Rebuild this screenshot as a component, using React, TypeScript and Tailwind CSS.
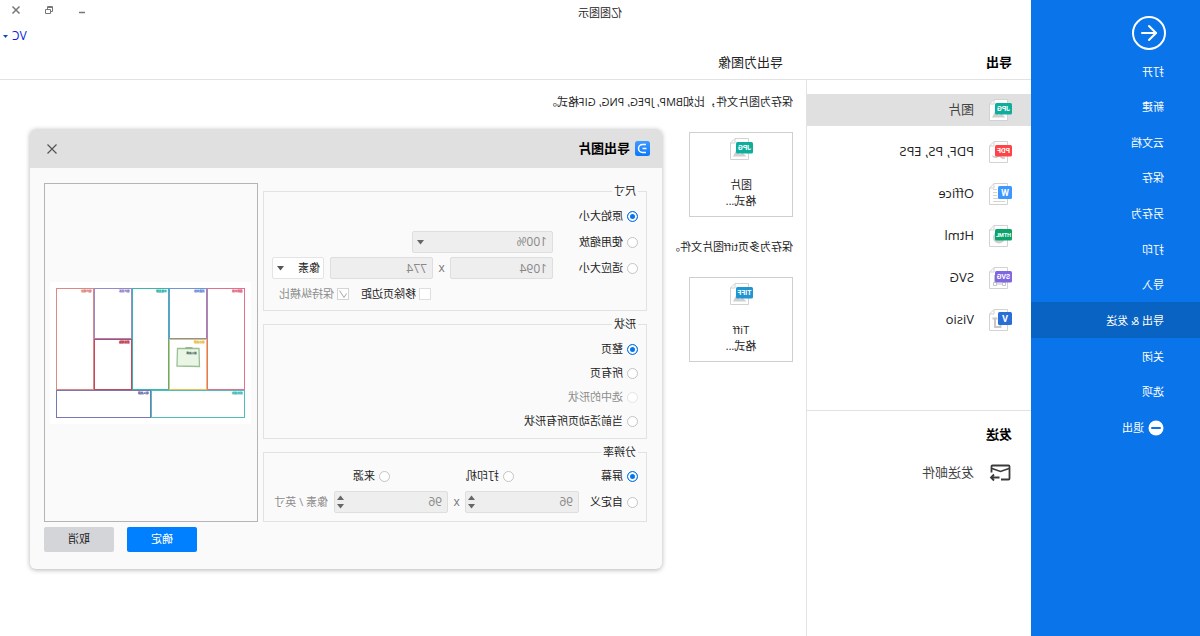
import React, { useState } from 'react';
import { ArrowLeft } from 'lucide-react';

type FileKind = 'JPG' | 'PDF' | 'W' | 'HTML' | 'SVG' | 'V' | 'TIFF';

const menuItems = ['打开', '新建', '云文档', '保存', '另存为', '打印', '导入', '导出 & 发送', '关闭', '选项'];

const exportTypes: { label: string; kind: FileKind }[] = [
  { label: '图片', kind: 'JPG' },
  { label: 'PDF, PS, EPS', kind: 'PDF' },
  { label: 'Office', kind: 'W' },
  { label: 'Html', kind: 'HTML' },
  { label: 'SVG', kind: 'SVG' },
  { label: 'Visio', kind: 'V' },
];

const badgeColors: Record<FileKind, string> = {
  JPG: '#0fae9c',
  PDF: '#ff4448',
  W: '#3d97ff',
  HTML: '#0aa36c',
  SVG: '#8066e0',
  V: '#2a6fd6',
  TIFF: '#1f95d2',
};

const badgeFontSizes: Record<FileKind, number> = {
  JPG: 7, PDF: 7, W: 9, HTML: 5.5, SVG: 7, V: 9, TIFF: 7,
};

// what peeks out from behind the badge
const FileDetail = ({ kind }: { kind: FileKind }) => {
  if (kind === 'W') {
    return <path d="M15 7.5h4M15 10.5h4M15 13.5h4M7 16.5h12M7 19.5h12" stroke="#d4d4d4" />;
  }
  if (kind === 'SVG') {
    return <path d="M6.5 16.5h3v3h-3zM15.5 16.5h3v3h-3zM9.500 18h6M17.5 16V9" stroke="#c4c4c4" fill="none" />;
  }
  if (kind === 'HTML') {
    return <circle cx="13" cy="13.5" r="6" fill="#cfcfcf" />;
  }
  if (kind === 'PDF') {
    return <path d="M7 18c3 0 4-1 5.5-3.5 1.5 2 4 3.5 7 1.5-2 2.5-5 1-7 0-1.5 2-3 3-5.5 2z" fill="#c8c8c8" stroke="#c8c8c8" />;
  }
  if (kind === 'V') {
    return <path d="M11.5 15v4h5.5v-9M14.500 10.5h5" stroke="#c8c8c8" strokeWidth="2" fill="none" />;
  }
  return <path d="M6.5 19.500l4-4 3 2 3-5 3.5 7z" fill="#cfcfcf" />;
};

const FileIcon = ({ kind }: { kind: FileKind }) => {
  const square = kind === 'W' || kind === 'V';
  return (
    <svg width="24" height="24" viewBox="0 0 24 24" className="shrink-0" aria-hidden="true">
      <path d="M4.5 1.5H18L22.5 6V22.5H4.5z" fill="#fff" stroke="#d2d2d2" />
      <path d="M18 1.5V6h4.5" fill="none" stroke="#d2d2d2" />
      <FileDetail kind={kind} />
      <rect x="0" y={square ? 4 : 5} width={square ? 14 : 17} height={square ? 13 : 11.5} rx="1.5" fill={badgeColors[kind]} />
      <text
        x={square ? 7 : 8.5}
        y={square ? 13.5 : 13.2}
        textAnchor="middle"
        fontSize={badgeFontSizes[kind]}
        fontWeight="700"
        fontFamily="Roboto, sans-serif"
        fill="#fff"
      >
        {kind}
      </text>
    </svg>
  );
};

const Caret = ({ className = '' }: { className?: string }) => (
  <svg width="7" height="5" viewBox="0 0 7 5" className={className} aria-hidden="true">
    <path d="M0 0h7L3.5 4.500z" fill="currentColor" />
  </svg>
);

interface RadioProps {
  name: string;
  label: string;
  checked: boolean;
  disabled?: boolean;
  onChange: () => void;
}

const Radio = ({ name, label, checked, disabled, onChange }: RadioProps) => (
  <label className={`flex items-center gap-1 ${disabled ? 'text-[#8c8c8c]' : ''}`}>
    <input
      type="radio"
      name={name}
      checked={checked}
      disabled={disabled}
      onChange={onChange}
      className="appearance-none w-[11px] h-[11px] rounded-full border border-[#c4c4c4] bg-white checked:border-[#0a75ea] checked:bg-[#0a75ea] checked:shadow-[inset_0_0_0_2px_white] disabled:border-[#e4e4e4]"
    />
    {label}
  </label>
);

const Spinner = ({ label }: { label: string }) => (
  <div className="flex w-[114px] h-[22px] border border-[#dedede] rounded-xs bg-[#eeeeee]">
    <input aria-label={label} defaultValue="96" disabled className="min-w-0 flex-1 px-[5px] text-xs text-[#888888]" />
    <div className="flex flex-col justify-center gap-1 pr-0.5 text-[#666666]">
      <button aria-label={`${label} +`} disabled><Caret className="rotate-180" /></button>
      <button aria-label={`${label} -`} disabled><Caret /></button>
    </div>
  </div>
);

const Tile = ({ kind, title }: { kind: FileKind; title: string }) => (
  <button className="flex flex-col items-center w-[104px] h-[85px] pt-1 border border-[#cfcfcf] bg-white leading-4">
    <FileIcon kind={kind} />
    <span className="mt-4">{title}</span>
    <span>格式...</span>
  </button>
);

const canvasBlocks = [
  { x: 6.5, y: 6.5, w: 37, h: 101, color: '#e4708c', label: '重要伙伴' },
  { x: 44.5, y: 6.5, w: 37, h: 50, color: '#7096d8', label: '关键业务' },
  { x: 44.5, y: 57.5, w: 37, h: 50, color: '#efc050', label: '核心资源' },
  { x: 82.5, y: 6.5, w: 36, h: 101, color: '#3cb5ae', label: '价值主张' },
  { x: 119.5, y: 6.5, w: 37, h: 50, color: '#968ac8', label: '客户关系' },
  { x: 119.5, y: 57.5, w: 37, h: 50, color: '#c2485a', label: '渠道通路' },
  { x: 157.5, y: 6.5, w: 37, h: 101, color: '#dc8a86', label: '客户细分' },
  { x: 6.5, y: 108.5, w: 93, h: 27, color: '#4fbdbd', label: '成本结构' },
  { x: 100.5, y: 108.5, w: 94, h: 27, color: '#7778b0', label: '收入来源' },
];

const Preview = () => (
  <div className="flex items-center justify-center w-[214px] border border-[#b4b4b4]">
    <svg width="201" height="142" viewBox="0 0 201 142" className="bg-white" role="img" aria-label="导出图片">
      {canvasBlocks.map((b) => (
        <g key={b.label}>
          <rect x={b.x} y={b.y} width={b.w} height={b.h} fill="#fff" stroke={b.color} />
          <text x={b.x + 2} y={b.y + 3.7} fontSize="2.6" fontWeight="700" fill={b.color} stroke={b.color} strokeWidth="0.3">{b.label}</text>
        </g>
      ))}
      <path d="M52 66.500h21.500l.5 17.500-22.500.500z" fill="#e9f6e6" stroke="#9dbf93" strokeWidth="1.300" />
      <path d="M58.500 66h7" stroke="#8fb585" strokeWidth="1.800" />
      <text x="54.500" y="71.500" fontSize="2.500" fill="#55706a" stroke="#55706a" strokeWidth="0.200">核心资源</text>
    </svg>
  </div>
);

const ExportDialog = () => {
  const [size, setSize] = useState('原始大小');
  const [shape, setShape] = useState('整页');
  const [dpi, setDpi] = useState('屏幕');

  const field = 'h-[22px] px-[5px] border border-[#dedede] rounded-xs bg-[#eeeeee] text-xs text-[#888888]';
  const group = 'border border-[#e2e2e2] pl-2';

  return (
    <div role="dialog" aria-labelledby="dialog-title" className="absolute top-[129px] right-[30px] w-[632px] rounded-md bg-[#fafafa] shadow-[0_1px_5px_rgba(0,0,0,0.3)] overflow-hidden">
      <div className="flex items-center h-[39px] pl-3 pr-[17px] bg-[#e0e0e0]">
        <svg width="15" height="15" viewBox="0 0 15 15" aria-hidden="true">
          <defs>
            <linearGradient id="logo" x1="0" y1="0" x2="0" y2="1">
              <stop offset="0" stopColor="#3f9bff" />
              <stop offset="1" stopColor="#0a78fa" />
            </linearGradient>
          </defs>
          <rect width="15" height="15" rx="2.5" fill="url(#logo)" />
          <path d="M4 3.500h3.500a4 4 0 0 1 0 8H4M3.500 7.500h4" fill="none" stroke="#fff" strokeWidth="1.5" />
        </svg>
        <h2 id="dialog-title" className="ml-[5px] flex-1 text-[13px] font-bold text-black">导出图片</h2>
        <button aria-label="关闭">
          <svg width="10" height="10" viewBox="0 0 10 10" aria-hidden="true">
            <path d="M.5.5l9 9M9.5.5l-9 9" stroke="#555" strokeWidth="1.2" />
          </svg>
        </button>
      </div>

      <div className="flex gap-[5px] pt-[15px] pl-[15px] pr-[14px]">
        <div className="flex-1 flex flex-col gap-[5px]">
          {/* Size */}
          <fieldset className={group}>
            <legend className="px-0.5 leading-4">尺寸</legend>
            <div className="flex flex-col gap-1 pt-1.5 pb-[5px]">
              <div className="flex items-center h-[22px]">
                <Radio name="size" label="原始大小" checked={size === '原始大小'} onChange={() => setSize('原始大小')} />
              </div>
              <div className="flex items-center h-[22px]">
                <div className="w-[85px]">
                  <Radio name="size" label="使用缩放" checked={size === '使用缩放'} onChange={() => setSize('使用缩放')} />
                </div>
                <div className="relative">
                  <select aria-label="使用缩放" disabled className={`${field} appearance-none w-[141px] opacity-100`}>
                    <option>100%</option>
                  </select>
                  <Caret className="absolute right-[5px] top-[9px] text-[#666666] pointer-events-none" />
                </div>
              </div>
              <div className="flex items-center h-[22px]">
                <div className="w-[85px]">
                  <Radio name="size" label="适应大小" checked={size === '适应大小'} onChange={() => setSize('适应大小')} />
                </div>
                <input aria-label="宽度" defaultValue="1094" disabled className={`${field} w-[103px]`} />
                <span className="w-[17px] text-center text-xs text-[#777777]">x</span>
                <input aria-label="高度" defaultValue="774" disabled className={`${field} w-[103px]`} />
                <div className="relative ml-1.5">
                  <select aria-label="单位" className="appearance-none w-[52px] h-[22px] px-[3px] border border-[#e4e4e4] rounded-xs bg-white">
                    <option>像素</option>
                  </select>
                  <Caret className="absolute right-[5px] top-[9px] text-[#555555] pointer-events-none" />
                </div>
              </div>
              <div className="flex items-center h-[22px] pl-[207px]">
                <label className="flex items-center gap-[3px]">
                  <input type="checkbox" className="appearance-none w-3 h-3 border border-[#dedede] bg-white checked:bg-[#0a75ea]" />
                  移除页边距
                </label>
                <label className="flex items-center gap-[3px] ml-3 text-[#8c8c8c]">
                  <span className="relative flex">
                    <input type="checkbox" defaultChecked disabled className="appearance-none w-3 h-3 border border-[#d4d4d4] bg-white" />
                    <svg width="12" height="12" viewBox="0 0 12 12" className="absolute inset-0" aria-hidden="true">
                      <path d="M2.5 5.5L5 9.5 9.5 2.5" fill="none" stroke="#a8a8a8" />
                    </svg>
                  </span>
                  保持纵横比
                </label>
              </div>
            </div>
          </fieldset>

          {/* Shape */}
          <fieldset className={group}>
            <legend className="px-0.5 leading-4">形状</legend>
            <div className="pt-[5px] pb-[5px]">
              {['整页', '所有页', '选中的形状', '当前活动页所有形状'].map((s) => (
                <div key={s} className="flex items-center h-6">
                  <Radio name="shape" label={s} checked={shape === s} disabled={s === '选中的形状'} onChange={() => setShape(s)} />
                </div>
              ))}
            </div>
          </fieldset>

          {/* Resolution */}
          <fieldset className={group}>
            <legend className="px-0.5 leading-4">分辨率</legend>
            <div className="flex flex-col gap-1 pt-[5px] pb-2">
              <div className="flex items-center h-[22px]">
                {['屏幕', '打印机', '来源'].map((d) => (
                  <div key={d} className="w-[124px]">
                    <Radio name="dpi" label={d} checked={dpi === d} onChange={() => setDpi(d)} />
                  </div>
                ))}
              </div>
              <div className="flex items-center h-[22px]">
                <div className="w-[59px]">
                  <Radio name="dpi" label="自定义" checked={dpi === '自定义'} onChange={() => setDpi('自定义')} />
                </div>
                <Spinner label="水平" />
                <span className="w-[17px] text-center text-xs text-[#777777]">x</span>
                <Spinner label="垂直" />
                <span className="ml-1.5 text-[#8c8c8c]">像素 / 英寸</span>
              </div>
            </div>
          </fieldset>
        </div>
        <Preview />
      </div>

      <div className="flex justify-end gap-[13px] pt-[5px] pr-[14px] pb-[17px]">
        <button className="w-[70px] h-[25px] rounded-xs bg-[#0080ff] text-white">确定</button>
        <button className="w-[70px] h-[25px] rounded-xs bg-[#d4d5d9] text-[#222222]">取消</button>
      </div>
    </div>
  );
};

const App = () => {
  const [active, setActive] = useState('导出 & 发送');
  const [type, setType] = useState('图片');

  return (
    <div className="relative flex min-h-screen -scale-x-100 bg-white text-[11px] text-[#222222] font-['Open_Sans','Noto_Sans_CJK_SC',sans-serif]">
      {/* Sidebar */}
      <nav className="w-[169px] shrink-0 pt-4 bg-[#0a75ea] text-white">
        <button aria-label="返回" className="flex items-center justify-center ml-[34px] w-[34px] h-[34px] rounded-full border-2 border-white">
          <ArrowLeft size={24} strokeWidth={2} />
        </button>
        <div className="grid auto-rows-fr h-[392px] mt-[3px]">
          {menuItems.map((item) => (
            <button
              key={item}
              onClick={() => setActive(item)}
              className={`flex items-center pl-9 pt-0.5 ${active === item ? 'bg-[#0963c3]' : ''}`}
            >
              {item}
            </button>
          ))}
          <button className="flex items-center gap-1 pl-9 pt-0.5">
            <svg width="16" height="16" viewBox="0 0 16 16" aria-hidden="true">
              <circle cx="8" cy="8" r="7.5" fill="#fff" />
              <path d="M4 8h8" stroke="#0a75ea" strokeWidth="2" strokeLinecap="round" />
            </svg>
            退出
          </button>
        </div>
      </nav>

      <div className="flex-1 flex flex-col">
        {/* Title bar */}
        <header className="border-b border-[#e2e2e2]">
          <div className="flex h-[26px]">
            <div className="flex-1 pr-[59px] text-center leading-[26px]">亿图图示</div>
            <div className="flex justify-end items-center gap-[17px] w-[110px] h-5 pr-2 text-[#777777]">
              <button aria-label="最小化" className="flex justify-center w-4">
                <svg width="10" height="10" viewBox="0 0 10 10"><path d="M2 7.5h6" stroke="currentColor" strokeWidth="1.5" /></svg>
              </button>
              <button aria-label="还原" className="flex justify-center w-4">
                <svg width="10" height="10" viewBox="0 0 10 10" fill="none" stroke="currentColor">
                  <path d="M3.5 4.5h5v4h-5zM3 6.5H1.5v-5h5V4M1.5 2.500h5" />
                </svg>
              </button>
              <button aria-label="关闭窗口" className="flex justify-center w-4">
                <svg width="10" height="10" viewBox="0 0 10 10"><path d="M1.5 1.5l7 7M8.5 1.5l-7 7" stroke="currentColor" strokeWidth="1.5" /></svg>
              </button>
            </div>
          </div>
          <div className="flex justify-end h-5 pr-[3px]">
            <button className="flex items-center gap-1 text-xs text-[#0a1be0]">
              VC
              <svg width="5" height="3" viewBox="0 0 5 3" aria-hidden="true"><path d="M0 0h5L2.5 3z" fill="#0a4fc0" /></svg>
            </button>
          </div>
          <div className="flex items-center h-[33px] text-[13px]">
            <h1 className="w-[225px] pl-[19px] font-bold text-black">导出</h1>
            <h2 className="pl-[23px]">导出为图像</h2>
          </div>
        </header>

        <div className="flex-1 flex">
          {/* Export types */}
          <section className="w-[225px] border-r border-[#e2e2e2] text-[13px]">
            <ul className="flex flex-col gap-2.5 pt-3.5 pb-[74px]">
              {exportTypes.map((t) => (
                <li key={t.label}>
                  <button
                    onClick={() => setType(t.label)}
                    className={`flex items-center gap-3.5 w-full h-8 pl-[19px] ${type === t.label ? 'bg-[#e0e0e0] text-[#444444]' : ''}`}
                  >
                    <FileIcon kind={t.kind} />
                    {t.label}
                  </button>
                </li>
              ))}
            </ul>
            <div className="border-t border-[#e2e2e2] pt-3">
              <h2 className="pl-[19px] leading-[22px] font-bold text-black">发送</h2>
              <button className="flex items-center gap-3.5 w-full h-8 mt-3 pl-[19px] text-[#444444]">
                <svg width="24" height="18" viewBox="0 0 24 18" fill="none" stroke="#3a3a3a" strokeWidth="1.8" aria-hidden="true">
                  <path d="M11 15.500H3.500a1 1 0 0 1-1-1V2.500a1 1 0 0 1 1-1h16a1 1 0 0 1 1 1V8.500" />
                  <path d="M3 4.500l8.500 3 8.500-3" strokeWidth="1.500" />
                  <path d="M12.500 13.500h8M18 10.500l3 3-3 3" />
                </svg>
                发送邮件
              </button>
            </div>
          </section>

          {/* Image formats */}
          <main className="flex-1 pl-[13px] pt-3">
            <p className="leading-5">保存为图片文件，比如BMP, JPEG, PNG, GIF格式。</p>
            <div className="mt-5">
              <Tile kind="JPG" title="图片" />
            </div>
            <p className="mt-5 leading-5">保存为多页tiff图片文件。</p>
            <div className="mt-5">
              <Tile kind="TIFF" title="Tiff" />
            </div>
          </main>
        </div>
      </div>

      <ExportDialog />
    </div>
  );
};

export default App;
